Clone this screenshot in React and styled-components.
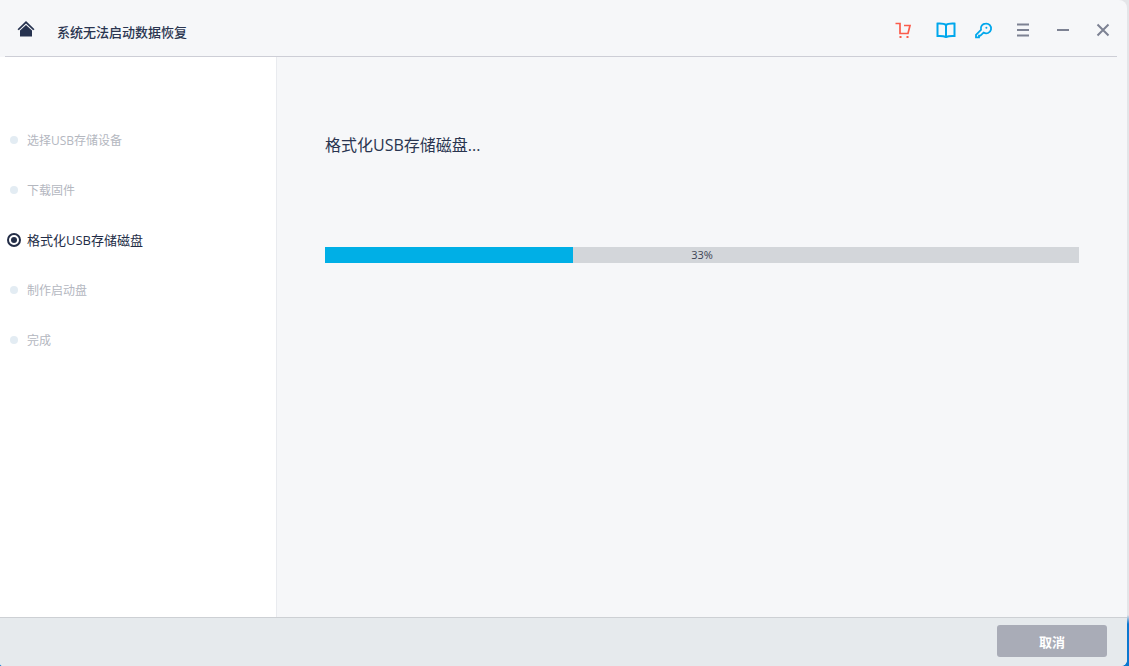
import React from "react"
import styled, { createGlobalStyle } from "styled-components"

const GlobalStyle = createGlobalStyle`
  html, body {
    margin: 0;
    padding: 0;
    height: 100%;
    overflow: hidden;
    background: #d9dadd;
  }
  #root {
    height: 100%;
  }
`

const Desktop = styled.div`
  display: flex;
  width: 1129px;
  height: 666px;
  background: linear-gradient(
    to bottom,
    #e4e5e8 0,
    #e4e5e8 615px,
    #0b78d0 624px,
    #0b78d0 100%
  );
  font-family: "Open Sans", "Noto Sans CJK SC", sans-serif;
`

const Window = styled.div`
  display: flex;
  flex-direction: column;
  width: 1127px;
  height: 666px;
  background: #f6f7f9;
  border-radius: 0 8px 6px 3px;
  overflow: hidden;
`

const Header = styled.header`
  display: flex;
  align-items: center;
  flex: none;
  height: 57px;
  box-sizing: border-box;
  margin: 0 10px 0 5px;
  padding: 4px 4px 0 12px;
  border-bottom: 1px solid #cdced6;
`

const HomeButton = styled.div`
  display: flex;
  width: 18px;
  height: 18px;
  margin-top: -3px;
  margin-right: 22px;
`

const AppTitle = styled.h1`
  flex: 1;
  margin: 3px 0 0;
  color: #2a3550;
  font-size: 13px;
  font-weight: 500;
  line-height: 18px;
`

const Tools = styled.div`
  display: flex;
  align-items: center;
  gap: 20px;
  margin-top: -1px;
`

const IconSlot = styled.div`
  display: flex;
  width: 20px;
  height: 20px;
  margin-left: ${p => p.$nudge || 0}px;
  margin-right: ${p => -(p.$nudge || 0)}px;
`

const Body = styled.div`
  display: flex;
  flex: 1;
  min-height: 0;
`

const Sidebar = styled.nav`
  flex: none;
  width: 277px;
  box-sizing: border-box;
  padding-top: 58px;
  background: #fff;
  border-right: 1px solid #e9ebef;
`

const Step = styled.div`
  display: flex;
  align-items: center;
  height: 50px;
  box-sizing: border-box;
  padding-left: 7px;
  padding-bottom: ${p => (p.$active ? "1px" : "0")};
  color: ${p => (p.$active ? "#232d47" : "#b4b7bf")};
  font-size: ${p => (p.$active ? "13px" : "12px")};
`

const DotSlot = styled.span`
  display: flex;
  align-items: center;
  justify-content: center;
  flex: none;
  width: 14px;
  height: 14px;
  margin-right: 6px;
`

const Dot = styled.span`
  width: 8px;
  height: 8px;
  border-radius: 50%;
  background: #e3ecf3;
`

const ActiveDot = styled.span`
  width: 14px;
  height: 14px;
  box-sizing: border-box;
  border: 2px solid #232d47;
  border-radius: 50%;
  display: flex;
  align-items: center;
  justify-content: center;
  &::after {
    content: "";
    width: 6px;
    height: 6px;
    border-radius: 50%;
    background: #232d47;
  }
`

const Main = styled.main`
  flex: 1;
  padding: 76px 48px 0;
`

const Heading = styled.h2`
  margin: 0;
  color: #2a3550;
  font-size: 16px;
  font-weight: 400;
  line-height: 24px;
`

const Progress = styled.div`
  position: relative;
  height: 16px;
  margin-top: 90px;
  background: #d3d6da;
`

const ProgressFill = styled.div`
  height: 100%;
  background: #00afe6;
`

const ProgressLabel = styled.span`
  position: absolute;
  inset: 0;
  text-align: center;
  color: #3b4254;
  font-size: 11px;
  line-height: 16px;
`

const Footer = styled.footer`
  display: flex;
  align-items: center;
  justify-content: flex-end;
  flex: none;
  height: 49px;
  box-sizing: border-box;
  padding: 0 20px 2px 0;
  background: #e6eaed;
  border-top: 1px solid #cdd0d4;
`

const CancelButton = styled.button`
  width: 110px;
  height: 32px;
  padding: 0;
  border: 0;
  border-radius: 3px;
  background: #a9acb7;
  color: #fff;
  font-family: inherit;
  font-size: 13px;
  font-weight: 700;
`

const HomeIcon = () => (
  <svg width="18" height="18" viewBox="0 0 18 18">
    <path d="M9 1 L0.5 9.2 L1.8 10.2 L9 3.4 L16.2 10.2 L17.5 9.2 Z" fill="#26324f" />
    <path d="M9 5 L15 10.6 V16.5 H3 V10.6 Z" fill="#26324f" />
  </svg>
)

const CartIcon = () => (
  <svg width="20" height="20" viewBox="0 0 20 20" fill="none" stroke="#fb5b4b" strokeWidth="1.7">
    <path d="M2.5 3.5 H7 V13.5 H15 L17 5.5 H11" />
    <path d="M6.5 17 H8.5 M13.5 17 H15.5" strokeWidth="2" />
  </svg>
)

const BookIcon = () => (
  <svg width="20" height="20" viewBox="0 0 20 20" fill="none" stroke="#00a7ec" strokeWidth="2">
    <path d="M10 5 C8.5 3.6 5 3.4 1.5 3.6 V16 C5 15.8 8 16 10 17 C12 16 15 15.8 18.5 16 V3.6 C15 3.4 11.5 3.6 10 5 Z" />
    <path d="M10 5 V17" />
  </svg>
)

const KeyIcon = () => (
  <svg width="20" height="20" viewBox="0 0 20 20" fill="none" stroke="#00a7ec" strokeWidth="1.8">
    <path d="M12.6 3.6 A4.9 4.9 0 1 1 10.6 12.6 L7.4 15.6 H6 V17.4 H3 V14.8 L8 9.8 A4.9 4.9 0 0 1 12.6 3.6 Z" />
    <circle cx="13.4" cy="7.8" r="1" fill="#00a7ec" stroke="none" />
  </svg>
)

const MenuIcon = () => (
  <svg width="20" height="20" viewBox="0 0 20 20" stroke="#7d8293" strokeWidth="2">
    <path d="M4 4.5 H16 M4 10 H16 M4 15.5 H16" />
  </svg>
)

const MinimizeIcon = () => (
  <svg width="20" height="20" viewBox="0 0 20 20" stroke="#7d8293" strokeWidth="2">
    <path d="M4 10 H16" />
  </svg>
)

const CloseIcon = () => (
  <svg width="20" height="20" viewBox="0 0 20 20" stroke="#7d8293" strokeWidth="2">
    <path d="M4.5 4.5 L15.5 15.5 M15.5 4.5 L4.5 15.5" />
  </svg>
)

const steps = [
  { label: "选择USB存储设备" },
  { label: "下载固件" },
  { label: "格式化USB存储磁盘", active: true },
  { label: "制作启动盘" },
  { label: "完成" },
]

const percent = 33
const trackWidth = 754

export default function App() {
  return (
    <Desktop>
      <GlobalStyle />
      <Window>
        <Header>
          <HomeButton>
            <HomeIcon />
          </HomeButton>
          <AppTitle>系统无法启动数据恢复</AppTitle>
          <Tools>
            <IconSlot><CartIcon /></IconSlot>
            <IconSlot $nudge={3}><BookIcon /></IconSlot>
            <IconSlot><KeyIcon /></IconSlot>
            <IconSlot><MenuIcon /></IconSlot>
            <IconSlot><MinimizeIcon /></IconSlot>
            <IconSlot><CloseIcon /></IconSlot>
          </Tools>
        </Header>
        <Body>
          <Sidebar>
            {steps.map(step => (
              <Step key={step.label} $active={step.active}>
                <DotSlot>{step.active ? <ActiveDot /> : <Dot />}</DotSlot>
                {step.label}
              </Step>
            ))}
          </Sidebar>
          <Main>
            <Heading>格式化USB存储磁盘...</Heading>
            <Progress>
              <ProgressFill style={{ width: `${Math.floor((trackWidth * percent) / 100)}px` }} />
              <ProgressLabel>{percent}%</ProgressLabel>
            </Progress>
          </Main>
        </Body>
        <Footer>
          <CancelButton>取消</CancelButton>
        </Footer>
      </Window>
    </Desktop>
  )
}
